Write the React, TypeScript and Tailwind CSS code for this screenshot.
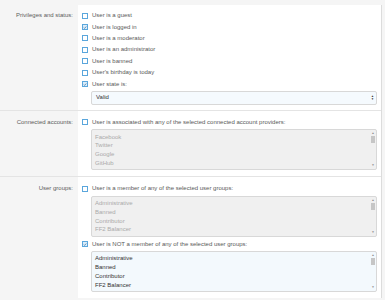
import React from 'react';

const privileges = [
  { label: "User is a guest", checked: false },
  { label: "User is logged in", checked: true },
  { label: "User is a moderator", checked: false },
  { label: "User is an administrator", checked: false },
  { label: "User is banned", checked: false },
  { label: "User's birthday is today", checked: false },
  { label: "User state is:", checked: true },
];

const providers = ["Facebook", "Twitter", "Google", "GitHub", "Microsoft"];
const groups = ["Administrative", "Banned", "Contributor", "FF2 Balancer", "Forum Admin"];

function Box({ checked }: { checked: boolean }) {
  return (
    <span className={`w-[6px] h-[6px] shrink-0 border border-[#5aa6dc] flex items-center justify-center ${checked ? 'bg-[#dcedf9]' : 'bg-white'}`}>
      {checked && (
        <svg viewBox="0 0 6 6" className="w-[5px] h-[5px]">
          <path d="M1 3 L2.5 4.4 L5 1.4" fill="none" stroke="#2f6ea3" strokeWidth="1" />
        </svg>
      )}
    </span>
  );
}

function Check({ label, checked }: { label: string; checked: boolean }) {
  return (
    <div className="flex items-center h-[11.4px] gap-[4px]">
      <Box checked={checked} />
      <span className="whitespace-nowrap">{label}</span>
    </div>
  );
}

function Scrollbar() {
  return (
    <div className="w-[6px] flex flex-col items-center justify-between py-[2px] h-full">
      <span className="text-[3px] leading-none text-[#888]">▲</span>
      <div className="flex-1 w-full pt-[1px]">
        <div className="w-[4px] mx-auto h-[7px] bg-[#c6c6c6]" />
      </div>
      <span className="text-[3px] leading-none text-[#888]">▼</span>
    </div>
  );
}

function ListBox({ items, disabled }: { items: string[]; disabled?: boolean }) {
  return (
    <div className={`ml-[9px] h-[41px] border border-[#d8d8d8] rounded-[2px] flex overflow-hidden ${disabled ? 'bg-[#f0f0f0] text-[#aaaaaa]' : 'bg-[#f3f9fd] text-[#333]'}`}>
      <div className="flex-1 pl-[3px] pt-[2.5px]">
        {items.map((it) => (
          <div key={it} className="h-[8.77px] leading-[8.77px] whitespace-nowrap">{it}</div>
        ))}
      </div>
      <Scrollbar />
    </div>
  );
}

function Row({ label, children, first }: { label: string; children: React.ReactNode; first?: boolean }) {
  return (
    <div className={`flex ${first ? '' : 'border-t border-[#e4e4e4]'}`}>
      <div className="w-[78px] shrink-0 bg-[#f5f5f5] text-right pr-[5px] text-[#5c5c5c]">
        <div className={`h-[11.4px] leading-[11.4px] ${first ? 'mt-[5px]' : 'mt-[6px]'}`}>{label}</div>
      </div>
      <div className={`flex-1 bg-white pl-[4px] pr-[4px] ${first ? 'pt-[5px] pb-[5px]' : 'pt-[6px] pb-[6px]'}`}>
        {children}
      </div>
    </div>
  );
}

export default function App() {
  return (
    <div
      className="w-[385px] h-[300px] overflow-hidden bg-[#f5f5f5] pt-[5px] text-[6px] text-[#595959]"
      style={{ fontFamily: '"Liberation Sans", Arial, sans-serif' }}
    >
      <div className="w-[382px] border-r border-[#dcdcdc]">
        <Row label="Privileges and status:" first>
          {privileges.map((p) => (
            <Check key={p.label} label={p.label} checked={p.checked} />
          ))}
          <div className="ml-[9px] mt-[1px] h-[14px] border border-[#d8d8d8] rounded-[2px] bg-[#f5fafe] flex items-center justify-between pl-[4px] pr-[2px] text-[#333]">
            <span>Valid</span>
            <span className="flex flex-col text-[3px] leading-[3px] text-[#333]">
              <span>▲</span>
              <span>▼</span>
            </span>
          </div>
        </Row>
        <Row label="Connected accounts:">
          <Check label="User is associated with any of the selected connected account providers:" checked={false} />
          <div className="mt-[1px]">
            <ListBox items={providers} disabled />
          </div>
        </Row>
        <Row label="User groups:">
          <Check label="User is a member of any of the selected user groups:" checked={false} />
          <div className="mt-[1px]">
            <ListBox items={groups} disabled />
          </div>
          <div className="mt-[2px]">
            <Check label="User is NOT a member of any of the selected user groups:" checked />
          </div>
          <div className="mt-[1px]">
            <ListBox items={groups} />
          </div>
        </Row>
      </div>
    </div>
  );
}
